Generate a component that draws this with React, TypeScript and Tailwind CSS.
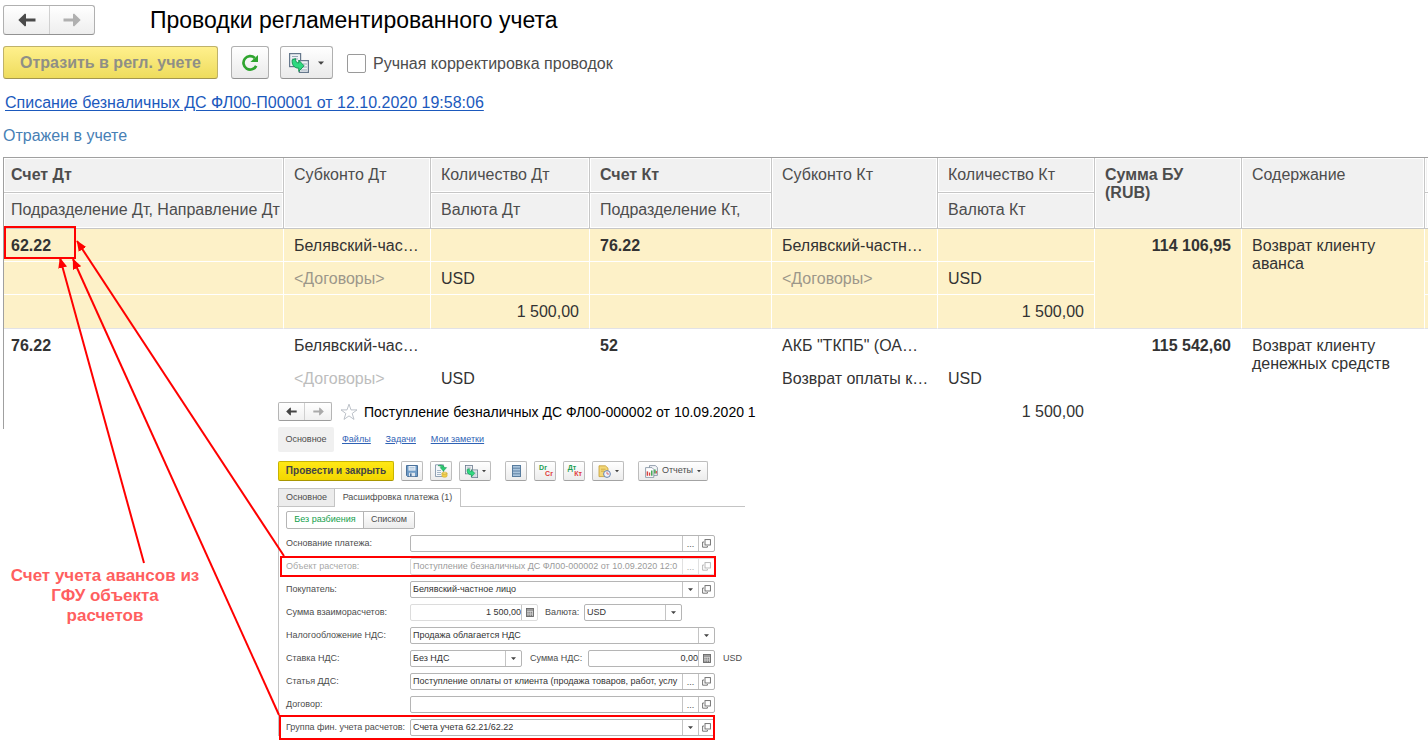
import React from "react";

const font = "font-['Liberation_Sans',Arial,sans-serif]";

/* ---------- icons ---------- */

function Arrow({ dir, size, color }: { dir: "left" | "right"; size: number; color: string }) {
  return (
    <svg width={size} height={size} viewBox="0 0 18 18" aria-hidden="true">
      <path
        d={dir === "left" ? "M0.3 9 7 2.4 8 3.2V7.5H17.5V10.6H8V14.8L7 15.6Z" : "M17.7 9 11 2.4 10 3.2V7.5H0.5V10.6H10V14.8L11 15.6Z"}
        fill={color}
      />
    </svg>
  );
}

function CaretIcon({ size = 5 }: { size?: number }) {
  return (
    <svg width={size} height={size} viewBox="0 0 6 6" aria-hidden="true">
      <path d="M0 1.5H6L3 4.7Z" fill="#444" />
    </svg>
  );
}

function RefreshIcon() {
  return (
    <svg width="20" height="20" viewBox="0 0 20 20" aria-hidden="true">
      <path d="M14.8 5A6.7 6.7 0 1 0 16.2 12.8" fill="none" stroke="#2fa52f" strokeWidth="2.7" />
      <path d="M18 2V9H10.4L13 6.6 15.6 4.2Z" fill="#2fa52f" />
    </svg>
  );
}

function CopyDocIcon({ size }: { size: number }) {
  return (
    <svg width={size} height={size} viewBox="0 0 20 20" aria-hidden="true">
      <rect x="0.6" y="0.6" width="11" height="13" fill="#eef1f4" stroke="#66788c" strokeWidth="1.2" />
      <path d="M3 3.5H9M3 6H9" stroke="#9aa9b8" />
      <rect x="10.4" y="7.6" width="9" height="11.8" fill="#eef1f4" stroke="#66788c" strokeWidth="1.2" />
      <path d="M14 11H18M14 14H18M12 17H18" stroke="#9aa9b8" />
      <path
        d="M3.2 6.8 6.6 5.6C6.4 8.4 7.4 9.8 9.8 10V7.2L15 12.8 9.8 18.4V15.2C5 15.2 2.6 11.6 3.2 6.8Z"
        fill="#2fd980"
        stroke="#0d8f4c"
        strokeWidth="0.9"
      />
    </svg>
  );
}

function StarIcon() {
  return (
    <svg width="18" height="18" viewBox="0 0 18 18" aria-hidden="true">
      <path
        d="M9 1.2 11 6.9H17L12.2 10.5 14 16.4 9 12.9 4 16.4 5.8 10.5 1 6.9H7Z"
        fill="#fff"
        stroke="#b4bac2"
        strokeWidth="0.9"
      />
    </svg>
  );
}

function SaveIcon() {
  return (
    <svg width="12" height="12" viewBox="0 0 12 12" aria-hidden="true">
      <path d="M0.5 0.5H11.5V11.5H1.5L0.5 10.5Z" fill="#6f9bc6" stroke="#4b719a" />
      <rect x="2.5" y="1" width="7" height="4.6" fill="#e8f0f8" />
      <path d="M3.5 2.5H8.5M3.5 4H8.5" stroke="#9db7d2" strokeWidth="0.7" />
      <rect x="3" y="7.8" width="6" height="3.4" fill="#dfe6ee" />
      <rect x="4" y="8.4" width="1.6" height="2.8" fill="#4b719a" />
    </svg>
  );
}

function PostIcon() {
  return (
    <svg width="14" height="14" viewBox="0 0 14 14" aria-hidden="true">
      <path d="M1.5 0.8H9.5V12.5H1.5Z" fill="#f4f7fa" stroke="#8497ab" strokeWidth="0.9" />
      <path d="M3 6.5H7M3 8.5H7M3 10.5H7" stroke="#8fa4ba" strokeWidth="0.8" />
      <path d="M4 1.6C7 0.6 9.6 1 10.4 3.6H12.6L9.4 7.2 6.2 3.6H8C7.4 2.4 6 2 4 1.6Z" fill="#2ccb70" stroke="#11914d" strokeWidth="0.5" />
      <ellipse cx="10.5" cy="9.2" rx="2.6" ry="1.2" fill="#f7df74" stroke="#c9a227" strokeWidth="0.5" />
      <path d="M7.9 9.2V12.2C8.4 13.6 12.6 13.6 13.1 12.2V9.2C12.6 10.6 8.4 10.6 7.9 9.2Z" fill="#f1cd4b" stroke="#c9a227" strokeWidth="0.5" />
    </svg>
  );
}

function ListIcon() {
  return (
    <svg width="9" height="12" viewBox="0 0 9 12" aria-hidden="true">
      <rect x="0.5" y="0.5" width="8" height="11" fill="#a9c4dc" stroke="#587c9e" />
      <path d="M1 3.2H8M1 6H8M1 8.8H8" stroke="#587c9e" strokeWidth="0.9" />
    </svg>
  );
}

function FolderClockIcon() {
  return (
    <svg width="13" height="13" viewBox="0 0 13 13" aria-hidden="true">
      <path d="M1 0.8H7.4L10 3.2V11.6H1Z" fill="#f3d777" stroke="#c49c35" strokeWidth="0.8" />
      <path d="M3 4.2H7.6M3 6.2H6" stroke="#c49c35" strokeWidth="0.7" />
      <circle cx="9" cy="9" r="3.4" fill="#edf3fb" stroke="#5876a8" strokeWidth="0.9" />
      <path d="M9 6.8V9H11.2" fill="none" stroke="#d9534f" strokeWidth="0.8" />
    </svg>
  );
}

function ReportIcon() {
  return (
    <svg width="13" height="13" viewBox="0 0 13 13" className="shrink-0" aria-hidden="true">
      <path d="M4.5 0.6H10.5L12.4 2.6V10.4H4.5Z" fill="#f3f5f8" stroke="#7b8a9b" strokeWidth="0.8" />
      <path d="M0.6 2.6H7L8.8 4.4V12.4H0.6Z" fill="#fff" stroke="#7b8a9b" strokeWidth="0.8" />
      <path d="M2.4 10.8V6.4" stroke="#d64541" strokeWidth="1.5" />
      <path d="M4.6 10.8V7.6M11.2 8.6V6" stroke="#d64541" strokeWidth="1.3" />
      <path d="M6.8 10.8V5.6M9.9 8.6V4.4" stroke="#37a34a" strokeWidth="1.4" />
    </svg>
  );
}

function OpenIcon() {
  return (
    <svg width="9" height="9" viewBox="0 0 9 9" aria-hidden="true">
      <rect x="3" y="0.6" width="5.4" height="5.4" fill="none" stroke="#666" strokeWidth="0.9" />
      <path d="M2 3H0.6V8.2H5.4V7" fill="none" stroke="#666" strokeWidth="0.9" />
    </svg>
  );
}

function CalcIcon() {
  return (
    <svg width="8" height="9" viewBox="0 0 8 9" aria-hidden="true">
      <rect x="0.5" y="0.5" width="7" height="8" fill="#d5d5d5" stroke="#666" strokeWidth="0.9" />
      <path d="M1 2H7" stroke="#666" />
      <path d="M1.4 4.3H6.8M1.4 6H6.8M1.4 7.6H6.8" stroke="#666" strokeWidth="0.9" strokeDasharray="1.2 0.6" />
    </svg>
  );
}

/* ---------- entries table ---------- */

const th =
  "border-r border-b border-[#c6c6c6] bg-[#f1f1f1] pl-[10px] pt-2 text-left align-top font-normal whitespace-nowrap text-[#4d4d4d] shadow-[inset_0_0_0_1px_#fff]";
const thFirst =
  "border-r border-b border-[#c6c6c6] bg-[#f1f1f1] pl-[7px] pt-2 text-left align-top font-normal whitespace-nowrap text-[#4d4d4d] shadow-[inset_0_0_0_1px_#fff]";
const thTail = "border-b border-[#c6c6c6] bg-[#f1f1f1] shadow-[inset_0_0_0_1px_#fff]";

type Entry = {
  dt: string;
  dtSub: string[];
  dtQty: string[];
  kt: string;
  ktSub: string[];
  ktQty: string[];
  sum: string;
  note: string;
  selected?: boolean;
};

const entries: Entry[] = [
  {
    dt: "62.22",
    dtSub: ["Белявский-час…", "<Договоры>", ""],
    dtQty: ["", "USD", "1 500,00"],
    kt: "76.22",
    ktSub: ["Белявский-частн…", "<Договоры>", ""],
    ktQty: ["", "USD", "1 500,00"],
    sum: "114 106,95",
    note: "Возврат клиенту аванса",
    selected: true,
  },
  {
    dt: "76.22",
    dtSub: ["Белявский-час…", "<Договоры>", ""],
    dtQty: ["", "USD", ""],
    kt: "52",
    ktSub: ['АКБ "ТКПБ" (ОА…', "Возврат оплаты к…", ""],
    ktQty: ["", "USD", "1 500,00"],
    sum: "115 542,60",
    note: "Возврат клиенту денежных средств",
  },
];

function EntryRows({ e }: { e: Entry }) {
  const bg = e.selected ? "bg-[#fdf1c8]" : "bg-white";
  const muted = e.selected ? "text-[#9c978a]" : "text-[#bdbdbd]";
  const edge = e.selected ? "border-b-[#e2e2e6]" : "border-b-white";
  return (
    <tbody className={bg}>
      {[0, 1, 2].map((i) => {
        const last = i === 2;
        const line = last ? edge : "border-b-white";
        const cell = `border-r border-b border-r-white ${line} pt-2 align-top whitespace-nowrap`;
        const sub = (t: string) => <span className={t.startsWith("<") ? muted : ""}>{t}</span>;
        return (
          <tr key={i} className={last ? "h-[34px]" : "h-[33px]"}>
            <td className={`${cell} pl-[7px] font-bold`}>{i === 0 ? e.dt : ""}</td>
            <td className={`${cell} pl-[10px]`}>{sub(e.dtSub[i])}</td>
            <td className={`${cell} px-[10px] ${last ? "text-right" : ""}`}>{e.dtQty[i]}</td>
            <td className={`${cell} pl-[10px] font-bold`}>{i === 0 ? e.kt : ""}</td>
            <td className={`${cell} pl-[10px]`}>{sub(e.ktSub[i])}</td>
            <td className={`${cell} px-[10px] ${last ? "text-right" : ""}`}>{e.ktQty[i]}</td>
            {i === 0 && (
              <>
                <td rowSpan={3} className={`border-r border-b border-r-white ${edge} px-[10px] pt-2 text-right align-top font-bold`}>
                  {e.sum}
                </td>
                <td rowSpan={3} className={`border-r border-b border-r-white ${edge} px-[10px] pt-2 align-top`}>
                  {e.note}
                </td>
              </>
            )}
            <td className={`border-b ${line}`} />
          </tr>
        );
      })}
    </tbody>
  );
}

function EntriesTable() {
  return (
    <table className="w-full table-fixed border-separate border-spacing-0 border-t border-l border-[#a0a0a0] text-base leading-[18px] text-[#333]">
      <colgroup>
        <col className="w-[280px]" />
        <col className="w-[147px]" />
        <col className="w-[159px]" />
        <col className="w-[182px]" />
        <col className="w-[166px]" />
        <col className="w-[157px]" />
        <col className="w-[147px]" />
        <col className="w-[183px]" />
        <col />
      </colgroup>
      <thead>
        <tr className="h-[35px]">
          <th className={thFirst}>
            <b>Счет Дт</b>
          </th>
          <th rowSpan={2} className={th}>Субконто Дт</th>
          <th className={th}>Количество Дт</th>
          <th className={th}>
            <b>Счет Кт</b>
          </th>
          <th rowSpan={2} className={th}>Субконто Кт</th>
          <th className={th}>Количество Кт</th>
          <th rowSpan={2} className={th}>
            <b>
              Сумма БУ
              <br />
              (RUB)
            </b>
          </th>
          <th rowSpan={2} className={th}>Содержание</th>
          <td className={thTail} />
        </tr>
        <tr className="h-9">
          <th className={thFirst}>Подразделение Дт, Направление Дт</th>
          <th className={th}>Валюта Дт</th>
          <th className={th}>Подразделение Кт,</th>
          <th className={th}>Валюта Кт</th>
          <td className={thTail} />
        </tr>
      </thead>
      {entries.map((e) => (
        <EntryRows key={e.dt} e={e} />
      ))}
    </table>
  );
}

/* ---------- payment form ---------- */

const smallBtn =
  "flex h-5 items-center justify-center rounded-[2px] border border-[#bdbdbd] border-b-[#a3a3a3] bg-linear-to-b from-white to-[#ececec]";

const box = "flex h-[17px] min-w-0 overflow-hidden rounded-[2px] border border-[#b5b5b5] bg-white";

function Cell({ label, children }: { label: string; children: React.ReactNode }) {
  return (
    <button type="button" aria-label={label} className="flex w-4 shrink-0 items-center justify-center border-l border-[#c4c4c4]">
      {children}
    </button>
  );
}

function Drop({ id, value }: { id: string; value: string }) {
  return (
    <div className="relative flex min-w-0 flex-1">
      <select id={id} defaultValue={value} className="min-w-0 flex-1 appearance-none bg-transparent pr-4 pl-[2px] text-[#333] outline-none">
        <option>{value}</option>
      </select>
      <span className="pointer-events-none absolute inset-y-0 right-0 flex w-4 items-center justify-center border-l border-[#c4c4c4]">
        <CaretIcon />
      </span>
    </div>
  );
}

function Row({ id, label, muted, children }: { id: string; label: string; muted?: boolean; children: React.ReactNode }) {
  return (
    <div className={`flex h-[23px] items-start ${muted ? "opacity-50" : ""}`}>
      <label htmlFor={id} className="w-[124px] shrink-0 leading-[17px] whitespace-nowrap">
        {label}
      </label>
      {children}
    </div>
  );
}

function RefRow({ id, label, value, muted }: { id: string; label: string; value: string; muted?: boolean }) {
  return (
    <Row id={id} label={label} muted={muted}>
      <div className={`${box} w-[305px]`}>
        <input id={id} defaultValue={value} disabled={muted} className="min-w-0 flex-1 pl-[2px] text-[#333] outline-none" />
        <Cell label={`${label} выбрать`}>
          <span className="leading-3">...</span>
        </Cell>
        <Cell label={`${label} открыть`}>
          <OpenIcon />
        </Cell>
      </div>
    </Row>
  );
}

function PaymentForm() {
  return (
    <section className="w-[468px] bg-white pt-[1px] text-[9px] text-[#4d4d4d]">
      <div className="flex items-center pl-[1px]">
        <div className="flex h-[19px] rounded-[2px] border border-[#b5b5b5] border-b-[#9d9d9d] bg-linear-to-b from-white to-[#f0f0f0]">
          <button type="button" aria-label="Назад" className="flex w-[26px] items-center justify-center border-r border-[#d0d0d0]">
            <Arrow dir="left" size={11} color="#444" />
          </button>
          <button type="button" aria-label="Вперед" className="flex w-[26px] items-center justify-center">
            <Arrow dir="right" size={11} color="#aaa" />
          </button>
        </div>
        <button type="button" aria-label="В избранное" className="ml-2">
          <StarIcon />
        </button>
        <h2 className="ml-[6px] text-[14px] leading-4 whitespace-nowrap text-black">
          Поступление безналичных ДС ФЛ00-000002 от 10.09.2020 1
        </h2>
      </div>

      <nav className="mt-[6px] flex h-[25px] items-center pl-[1px]">
        <a href="#main" className="flex h-full w-14 items-center justify-center rounded-[2px] bg-[#f0f0f0]">
          Основное
        </a>
        <div className="ml-2 flex gap-[15px] text-[#2f62b5] underline underline-offset-1">
          <a href="#files">Файлы</a>
          <a href="#tasks">Задачи</a>
          <a href="#notes">Мои заметки</a>
        </div>
      </nav>

      <div className="mt-[9px] flex items-center gap-[7px] pl-[1px]">
        <button
          type="button"
          className="h-5 w-[116px] rounded-[2px] border border-[#c8b400] border-b-[#a89600] bg-linear-to-b from-[#ffe815] to-[#f3d600] text-[10px] leading-3 font-bold whitespace-nowrap text-[#444]"
        >
          Провести и закрыть
        </button>
        <button type="button" aria-label="Записать" className={`${smallBtn} w-[22px]`}>
          <SaveIcon />
        </button>
        <button type="button" aria-label="Провести" className={`${smallBtn} w-[22px]`}>
          <PostIcon />
        </button>
        <button type="button" aria-label="Создать на основании" className={`${smallBtn} w-8 gap-1`}>
          <CopyDocIcon size={13} />
          <CaretIcon size={4} />
        </button>
        <button type="button" aria-label="Движения документа" className={`${smallBtn} ml-[7px] w-[22px]`}>
          <ListIcon />
        </button>
        <button type="button" aria-label="Dr Cr" className={`${smallBtn} w-[22px] flex-col text-[7px] leading-[6px] font-bold`}>
          <span className="mr-1 text-[#1fa053]">Dr</span>
          <span className="ml-2 text-[#e03a3a]">Cr</span>
        </button>
        <button type="button" aria-label="Дт Кт" className={`${smallBtn} w-[22px] flex-col text-[7px] leading-[6px] font-bold`}>
          <span className="mr-1 text-[#1fa053]">Дт</span>
          <span className="ml-2 text-[#e03a3a]">Кт</span>
        </button>
        <button type="button" aria-label="Файлы и история" className={`${smallBtn} w-8 gap-1`}>
          <FolderClockIcon />
          <CaretIcon size={4} />
        </button>
        <button type="button" className={`${smallBtn} ml-[7px] w-[70px] gap-1`}>
          <ReportIcon />
          Отчеты
          <CaretIcon size={4} />
        </button>
      </div>

      <div className="mt-[7px] flex h-[19px] border-b border-[#c4c4c4] pl-[1px]">
        <button type="button" className="w-[57px] border border-b-0 border-[#c4c4c4] bg-[#ececec]">
          Основное
        </button>
        <button type="button" className="-mb-px w-[126px] border border-b-0 border-l-0 border-[#c4c4c4] bg-white">
          Расшифровка платежа (1)
        </button>
      </div>

      <div className="ml-[1px] border-l border-[#c4c4c4] pt-1 pl-[7px]">
        <div className="flex h-[18px] w-[129px] rounded-[2px] border border-[#b5b5b5]">
          <button type="button" className="w-[77px] border-r border-[#b5b5b5] whitespace-nowrap text-[#12a04c]">
            Без разбиения
          </button>
          <button type="button" className="flex-1 bg-linear-to-b from-white to-[#ececec]">
            Списком
          </button>
        </div>

        <div className="mt-[6px]">
          <RefRow id="base" label="Основание платежа:" value="" />
          <RefRow id="object" label="Объект расчетов:" value="Поступление безналичных ДС ФЛ00-000002 от 10.09.2020 12:0" muted />
          <Row id="buyer" label="Покупатель:">
            <div className={`${box} w-[305px]`}>
              <Drop id="buyer" value="Белявский-частное лицо" />
              <Cell label="Открыть покупателя">
                <OpenIcon />
              </Cell>
            </div>
          </Row>
          <Row id="amount" label="Сумма взаиморасчетов:">
            <div className="flex h-[17px] w-32 overflow-hidden rounded-[2px] border border-[#dcdcdc]">
              <input id="amount" defaultValue="1 500,00" className="min-w-0 flex-1 text-right text-[#333] outline-none" />
              <Cell label="Калькулятор суммы">
                <CalcIcon />
              </Cell>
            </div>
            <label htmlFor="currency" className="ml-[7px] w-[39px] leading-[17px] whitespace-nowrap">
              Валюта:
            </label>
            <div className={`${box} w-[98px]`}>
              <Drop id="currency" value="USD" />
            </div>
          </Row>
          <Row id="tax" label="Налогообложение НДС:">
            <div className={`${box} w-[305px]`}>
              <Drop id="tax" value="Продажа облагается НДС" />
            </div>
          </Row>
          <Row id="rate" label="Ставка НДС:">
            <div className={`${box} w-28`}>
              <Drop id="rate" value="Без НДС" />
            </div>
            <label htmlFor="vat" className="ml-2 w-[58px] leading-[17px] whitespace-nowrap">
              Сумма НДС:
            </label>
            <div className={`${box} w-[127px]`}>
              <input id="vat" defaultValue="0,00" className="min-w-0 flex-1 text-right text-[#333] outline-none" />
              <Cell label="Калькулятор НДС">
                <CalcIcon />
              </Cell>
            </div>
            <span className="ml-2 leading-[17px]">USD</span>
          </Row>
          <RefRow id="flow" label="Статья ДДС:" value="Поступление оплаты от клиента (продажа товаров, работ, услу" />
          <RefRow id="contract" label="Договор:" value="" />
          <div className="h-[17px] overflow-hidden">
            <Row id="group" label="Группа фин. учета расчетов:">
              <div className={`${box} w-[305px]`}>
                <Drop id="group" value="Счета учета 62.21/62.22" />
                <Cell label="Открыть группу">
                  <OpenIcon />
                </Cell>
              </div>
            </Row>
          </div>
        </div>
      </div>
    </section>
  );
}

/* ---------- markup drawn over the windows ---------- */

function Annotations() {
  return (
    <svg className="pointer-events-none absolute top-0 left-0" width="760" height="740" aria-hidden="true">
      <defs>
        <marker id="tip" markerUnits="userSpaceOnUse" markerWidth="12" markerHeight="10" refX="10" refY="5" orient="auto">
          <path d="M0 0.5 10.5 5 0 9.5Z" fill="#f00" />
        </marker>
      </defs>
      <g fill="none" stroke="#f00" strokeWidth="2">
        <rect x="5" y="227" width="70" height="31" />
        <rect x="281" y="557" width="434" height="19" />
        <rect x="280" y="716" width="434" height="23" />
        <path d="M144 563 60 258" markerEnd="url(#tip)" />
        <path d="M279 715 73 259" markerEnd="url(#tip)" />
        <path d="M284 556 77 241" markerEnd="url(#tip)" />
      </g>
    </svg>
  );
}

export default function App() {
  return (
    <main className={`relative min-h-screen overflow-hidden bg-white pt-[5px] pl-[3px] ${font}`}>
      <header className="flex items-center">
        <div className="flex h-[30px] rounded-[3px] border border-[#b0b0b0] border-b-[#929292] bg-linear-to-b from-white to-[#eee]">
          <button type="button" aria-label="Назад" className="flex w-[46px] items-center justify-center border-r border-[#d0d0d0]">
            <Arrow dir="left" size={18} color="#4a4a4a" />
          </button>
          <button type="button" aria-label="Вперед" className="flex w-11 items-center justify-center">
            <Arrow dir="right" size={18} color="#b0b0b0" />
          </button>
        </div>
        <h1 className="ml-[55px] text-[23px] leading-7 text-black">Проводки регламентированного учета</h1>
      </header>

      <div className="mt-[11px] flex h-[33px] items-center">
        <button
          type="button"
          className="h-full w-[215px] rounded-[3px] border border-[#bfb26a] border-b-[#a39650] bg-linear-to-b from-[#fff08c] to-[#eedc5c] text-base leading-5 font-bold text-[#8f8f86]"
        >
          Отразить в регл. учете
        </button>
        <button
          type="button"
          aria-label="Обновить"
          className="ml-[13px] flex h-full w-[38px] items-center justify-center rounded-[3px] border border-[#b0b0b0] border-b-[#929292] bg-linear-to-b from-white to-[#eaeaea]"
        >
          <RefreshIcon />
        </button>
        <button
          type="button"
          aria-label="Создать на основании"
          className="ml-[11px] flex h-full w-[53px] items-center justify-center gap-[9px] rounded-[3px] border border-[#b0b0b0] border-b-[#929292] bg-linear-to-b from-white to-[#eaeaea]"
        >
          <CopyDocIcon size={20} />
          <CaretIcon size={6} />
        </button>
        <div className="ml-[14px] flex items-center pt-[2px]">
          <input
            id="manual"
            type="checkbox"
            className="size-[19px] appearance-none rounded-[2px] border border-[#9a9a9a] bg-white"
          />
          <label htmlFor="manual" className="ml-[7px] text-base leading-5 text-[#4d4d4d]">
            Ручная корректировка проводок
          </label>
        </div>
      </div>

      <div className="mt-[14px] pl-[2px] text-base leading-5">
        <a href="#document" className="text-[#1b59bd] underline underline-offset-2">
          Списание безналичных ДС ФЛ00-П00001 от 12.10.2020 19:58:06
        </a>
      </div>
      <p className="mt-[13px] mb-[11px] text-base leading-5 text-[#4780b5]">Отражен в учете</p>

      <EntriesTable />

      <div className="relative -mt-7 flex">
        <aside className="w-[274px] shrink-0">
          <p className="w-51 pt-[165px] text-center text-[17px] leading-5 font-bold text-[#ff5f5f]">
            <span className="block whitespace-nowrap">Счет учета авансов из</span>
            <span className="block">ГФУ объекта</span>
            <span className="block">расчетов</span>
          </p>
        </aside>
        <PaymentForm />
      </div>

      <Annotations />
    </main>
  );
}
